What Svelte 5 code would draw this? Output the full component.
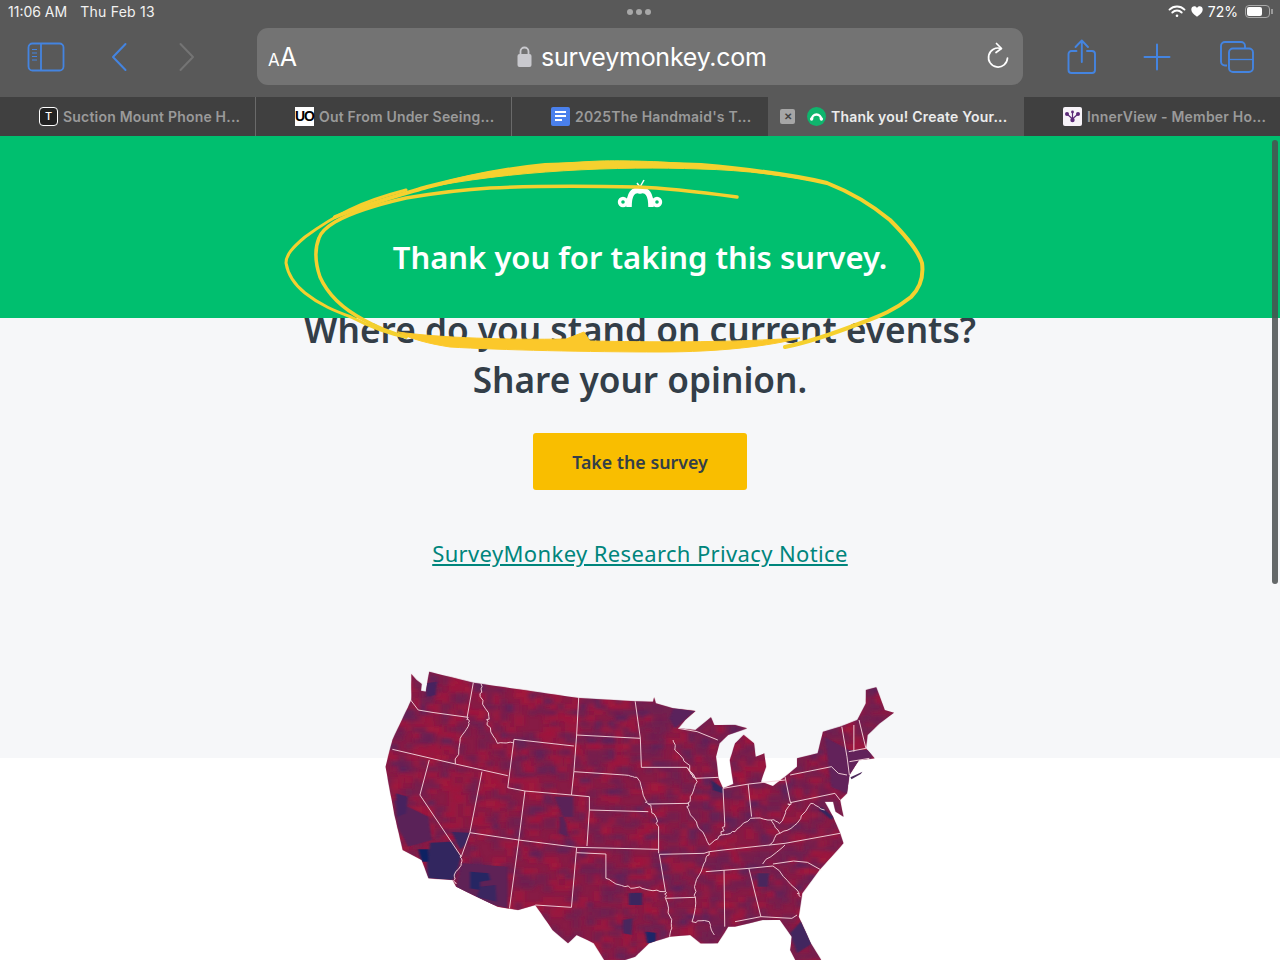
<script>
  const tabs = [
    { title: 'Suction Mount Phone H...', icon: 't' },
    { title: 'Out From Under Seeing...', icon: 'uo' },
    { title: "2025The Handmaid's T...", icon: 'doc' },
    { title: 'Thank you! Create Your...', icon: 'sm', active: true },
    { title: 'InnerView - Member Ho...', icon: 'iv' }
  ];

  const outline = 'M120,42 L135,60 L150,72 L148,92 L162,95 L172,35 L300,68 L606,114 L770,124 L822,125 L825,112 L830,130 L880,145 L945,153 L915,180 L895,205 L945,210 L990,172 L1000,195 L1060,195 L1095,205 L1040,225 L1015,250 L1005,290 L1012,355 L1025,385 L1055,372 L1045,300 L1060,250 L1085,225 L1115,250 L1120,290 L1145,280 L1150,320 L1135,365 L1170,378 L1205,350 L1240,320 L1240,295 L1300,280 L1315,215 L1365,200 L1415,180 L1440,130 L1440,90 L1470,82 L1495,150 L1522,158 L1480,190 L1445,225 L1440,265 L1465,295 L1420,300 L1392,345 L1385,400 L1365,420 L1375,470 L1352,455 L1345,425 L1320,425 L1345,470 L1365,520 L1375,550 L1340,590 L1305,630 L1255,700 L1245,770 L1280,850 L1310,900 L1235,900 L1220,870 L1225,830 L1190,780 L1140,780 L1060,800 L1040,800 L1010,850 L960,850 L930,825 L870,830 L810,850 L770,890 L740,900 L680,900 L650,850 L600,825 L575,850 L530,810 L480,735 L430,750 L370,740 L250,680 L240,660 L170,655 L150,600 L95,570 L70,460 L45,320 L65,240 L120,120 Z';

  const straight = [
    '118,120 140,150 180,157 285,172', '300,68 282,172', '65,268 248,312 400,347', '418,238 592,258',
    '606,114 600,225 592,335 585,405', '418,238 400,383', '400,383 450,393 585,405 637,410 637,450',
    '600,225 785,235', '770,124 785,235 788,322', '592,335 740,345', '637,450 808,455', '450,393 432,540',
    '637,450 630,558', '290,518 432,540 600,562 838,568', '838,500 838,580', '325,335 290,518',
    '172,300 145,405 265,590', '265,590 290,518', '432,540 405,745', '600,562 585,742 480,735',
    '600,578 685,582 685,655', '840,583 858,695', '858,715 945,712', '840,583 970,580 985,575',
    '975,635 1100,625 1170,618', '1028,630 1030,800', '1100,625 1135,770', '1060,785 1135,770 1225,775 1240,765',
    '1170,612 1230,603 1270,607 1310,630', '985,575 1025,570 1205,550 1365,520', '788,322 920,322', '808,432 925,430',
    '945,355 1012,352', '1025,385 1030,490', '1025,385 1100,372 1205,360', '1098,372 1108,470', '1205,350 1220,425',
    '1220,345 1340,320 1360,340 1385,345', '1220,428 1350,400 1365,420', '1370,200 1385,290 1392,345',
    '1405,195 1405,275', '1420,180 1440,265', '1390,275 1440,265', '1392,305 1450,295', '895,205 950,215 1010,240'
  ];
  const rivers = [
    '285,172 288,190 262,235 248,312', '322,70 320,110 345,170 340,195 370,250 415,248',
    '740,345 775,352 800,420 808,432 825,462 838,500', '265,590 265,610 245,650 250,672',
    '685,655 740,680 790,685 858,695', '858,695 858,715 875,790 870,830', '985,575 970,610 945,670 945,712 935,785 985,785 1000,825',
    '1170,618 1240,690 1250,710', '1140,612 1205,555', '920,322 945,355', '920,322 950,365 930,410 920,440 950,495 985,555',
    '880,240 885,270 920,310 945,355', '1030,490 1020,525 985,555',
    '1020,525 1060,515 1105,475 1165,480 1190,490 1215,440 1220,425', '1165,480 1190,520 1160,555',
    '1190,520 1240,490 1280,430 1320,450'
  ];

  let seed = 7;
  const rand = () => (seed = (seed * 16807) % 2147483647) / 2147483647;

  const wiggle = (line) => {
    const pts = line.split(' ').map((p) => p.split(',').map(Number));
    const out = [pts[0].join(',')];
    for (let i = 1; i < pts.length; i++) {
      const [ax, ay] = pts[i - 1];
      const [bx, by] = pts[i];
      for (let k = 1; k < 5; k++) {
        out.push(`${ax + ((bx - ax) * k) / 5 + (rand() - 0.5) * 9},${ay + ((by - ay) * k) / 5 + (rand() - 0.5) * 7}`);
      }
      out.push(`${bx},${by}`);
    }
    return out.join(' ');
  };
  const borders = [...straight, ...rivers.map(wiggle)];

  const cells = [];
  for (let y = 30; y < 900; y += 17) {
    for (let x = 40; x < 1530; x += 21) {
      const r = rand();
      const east = x / 1530;
      let fill = null;
      if (r < 0.18 + east * 0.22) fill = '#6a2053';
      else if (r < 0.21 + east * 0.26) fill = '#4d2563';
      else if (r > 0.86 - (1 - east) * 0.12) fill = '#a8163a';
      if (fill) cells.push({ x, y, w: 18 + rand() * 24, h: 14 + rand() * 20, fill });
    }
  }
  const darks = [
    { d: 'M175,548 L238,545 L265,590 L250,640 L240,660 L170,655 L165,610 Z', fill: '#33265f' },
    { d: 'M238,516 L290,518 L280,550 L262,570 Z', fill: '#3b2560' },
    { d: 'M70,420 L170,470 L180,540 L110,560 L80,500 Z', fill: '#5a2258' },
    { d: 'M75,400 L110,410 L105,460 L80,470 Z', fill: '#46245f' },
    { d: 'M268,610 L400,620 L400,745 L300,720 L250,680 Z', fill: '#5e2256' },
    { d: 'M290,635 L345,640 L350,660 L320,665 L320,690 L290,685 Z', fill: '#262663' },
    { d: 'M320,680 L365,675 L368,725 L310,710 Z', fill: '#3a2561' },
    { d: 'M140,568 L170,568 L170,605 L150,605 Z', fill: '#0a2463' },
    { d: 'M535,410 L590,410 L590,470 L550,470 L550,520 L575,530 L570,490 Z', fill: '#5a2358' },
    { d: 'M160,70 L195,65 L190,105 L165,110 Z', fill: '#46245f' },
    { d: 'M1220,820 L1255,780 L1285,850 L1240,880 Z', fill: '#43265f' },
    { d: 'M800,815 L830,818 L830,850 L805,850 Z', fill: '#1b2668' },
    { d: 'M752,700 L790,698 L790,735 L752,735 Z', fill: '#3a265f' },
    { d: 'M735,780 L762,775 L760,825 L735,820 Z', fill: '#4a265d' },
    { d: 'M1320,230 L1390,270 L1465,270 L1440,330 L1385,400 L1340,380 Z', fill: '#62225a' },
    { d: 'M880,145 L945,153 L885,205 L870,175 Z', fill: '#5a245b' },
    { d: 'M1125,640 L1160,640 L1155,680 L1125,680 Z', fill: '#4a265d' },
    { d: 'M990,360 L1025,385 L1025,400 L995,390 Z', fill: '#33265f' },
    { d: 'M1310,440 L1345,470 L1340,480 L1305,450 Z', fill: '#33265f' }
  ];
</script>

<div class="screen">
  <header class="chrome">
    <div class="status">
      <div class="status-left"><span>11:06 AM</span><span class="date">Thu Feb 13</span></div>
      <div class="dots"><i></i><i></i><i></i></div>
      <div class="status-right">
        <svg width="18" height="13" viewBox="0 0 18 13" fill="none" stroke="#fff" stroke-width="1.9" stroke-linecap="round">
          <path d="M1.5 4.6a10.6 10.6 0 0 1 15 0"/><path d="M4.3 7.5a6.6 6.6 0 0 1 9.400 0"/>
          <circle cx="9" cy="10.800" r="1.300" fill="#fff" stroke="none"/>
        </svg>
        <svg width="12" height="11" viewBox="0 0 12 11" fill="#fff">
          <path d="M6 10.800 C2 7.800 .3 6 .3 3.500 C.3 1.500 1.800 .3 3.300 .3 C4.500 .3 5.400 .9 6 1.900 C6.600 .9 7.500 .3 8.700 .3 C10.200 .3 11.700 1.500 11.700 3.500 C11.700 6 10 7.800 6 10.800Z"/>
        </svg>
        <span>72%</span>
        <div class="battery"><b></b></div>
        <div class="nub"></div>
      </div>
    </div>

    <div class="toolbar">
      <div class="tool-left">
        <svg class="blue" width="38" height="30" viewBox="0 0 38 30" fill="none" stroke-width="1.800">
          <rect x="1.500" y="1.500" width="35" height="27" rx="4"/><path d="M14 1.500v27"/>
          <path d="M5 7.500h5M5 11h5M5 14.500h5M5 18h5" stroke-width="1.100"/>
        </svg>
        <svg class="blue" width="16" height="30" viewBox="0 0 16 30" fill="none" stroke-width="2" stroke-linecap="round" stroke-linejoin="round">
          <path d="M14.500 2 L2 15 L14.500 28"/>
        </svg>
        <svg class="fwd" width="16" height="30" viewBox="0 0 16 30" fill="none" stroke-width="2" stroke-linecap="round" stroke-linejoin="round">
          <path d="M1.500 2 L14 15 L1.500 28"/>
        </svg>
      </div>

      <div class="address">
        <span class="aa"><small>A</small>A</span>
        <div class="url">
          <svg width="15" height="21" viewBox="0 0 15 21" fill="#c9c9ce">
            <rect x=".5" y="8" width="14" height="13" rx="2"/>
            <path d="M3.500 9V5.500a4 4 0 0 1 8 0V9" fill="none" stroke="#c9c9ce" stroke-width="1.800"/>
          </svg>
          <span>surveymonkey.com</span>
        </div>
        <svg class="reload" width="24" height="28" viewBox="0 0 24 28" fill="none" stroke="#fff" stroke-width="1.700" stroke-linecap="round" stroke-linejoin="round">
          <path d="M15 6.500 A9.500 9.500 0 1 0 21.500 16"/><path d="M10.500 1.500 L15.500 6.500 L10 10.500"/>
        </svg>
      </div>

      <div class="tool-right">
        <svg class="blue" width="30" height="36" viewBox="0 0 30 36" fill="none" stroke-width="1.900" stroke-linecap="round" stroke-linejoin="round">
          <path d="M9.500 12 H4.500 A3 3 0 0 0 1.500 15 V31 A3 3 0 0 0 4.500 34 H25 A3 3 0 0 0 28 31 V15 A3 3 0 0 0 25 12 H20"/>
          <path d="M14.800 23 V2 M8.500 8 L14.800 1.500 L21 8"/>
        </svg>
        <svg class="blue" width="28" height="28" viewBox="0 0 28 28" fill="none" stroke-width="2" stroke-linecap="round">
          <path d="M14 1.500V26.500M1.500 14H26.500"/>
        </svg>
        <svg class="blue" width="34" height="32" viewBox="0 0 34 32" fill="none" stroke-width="1.900">
          <path d="M7 24.500 H5 A4 4 0 0 1 1 20.500 V5 A4 4 0 0 1 5 1 H21 A4 4 0 0 1 25 5 V7"/>
          <rect x="9" y="7.500" width="24" height="23.500" rx="4"/><path d="M9 18.500H33" stroke-width="1.300"/>
        </svg>
      </div>
    </div>
  </header>

  <nav class="tabs">
    {#each tabs as tab}
      <div class="tab" class:active={tab.active}>
        {#if tab.active}<span class="close">✕</span>{/if}
        {#if tab.icon === 't'}
          <span class="fav fav-t">T</span>
        {:else if tab.icon === 'uo'}
          <span class="fav fav-uo">UO</span>
        {:else if tab.icon === 'doc'}
          <svg class="fav" width="19" height="19" viewBox="0 0 19 19">
            <rect width="19" height="19" rx="2" fill="#4a80ec"/>
            <path d="M4 5h11M4 9h11M4 13h7" stroke="#fff" stroke-width="2"/>
          </svg>
        {:else if tab.icon === 'sm'}
          <svg class="fav" width="19" height="19" viewBox="0 0 19 19">
            <circle cx="9.500" cy="9.500" r="9.500" fill="#0fb56d"/>
            <path d="M5 12 A4.500 4.500 0 0 1 14 12" fill="none" stroke="#fff" stroke-width="2.400"/>
            <circle cx="4.600" cy="12" r="1.700" fill="#fff"/><circle cx="14.400" cy="12" r="1.700" fill="#fff"/>
          </svg>
        {:else}
          <svg class="fav" width="19" height="19" viewBox="0 0 19 19">
            <rect width="19" height="19" rx="2" fill="#f7f3f8"/>
            <path d="M4 7 L9.500 12 L15 7 M9.500 5 V12" fill="none" stroke="#5b2a78" stroke-width="1.200"/>
            <circle cx="4" cy="7" r="2" fill="#5b2a78"/><circle cx="9.500" cy="13" r="2.200" fill="#5b2a78"/><circle cx="15" cy="7" r="2" fill="#5b2a78"/>
            <circle cx="9.500" cy="5" r="1.400" fill="#5b2a78"/>
          </svg>
        {/if}
        <span class="tab-title">{tab.title}</span>
      </div>
    {/each}
  </nav>

  <main class="page">
    <section class="banner">
      <svg class="logo" width="48" height="34" viewBox="0 0 48 34" fill="none" stroke="#fff" aria-hidden="true">
        <path d="M13 29 C13 16 17 11 24 13 C31 11 35 16 35 29" stroke-width="5.500"/>
        <circle cx="7" cy="24" r="3.500" stroke-width="3.400"/><circle cx="41" cy="24" r="3.500" stroke-width="3.400"/>
        <path d="M10 24 L15 21 M38 24 L33 21" stroke-width="3"/>
        <path d="M21 5 L24 9 L28 2" stroke-width="1.500"/>
      </svg>
      <h1>Thank you for taking this survey.</h1>
    </section>

    <section class="hero">
      <h2>Where do you stand on current events?<br />Share your opinion.</h2>
      <button class="cta">Take the survey</button>
      <a class="privacy" href="#privacy">SurveyMonkey Research Privacy Notice</a>
      <svg class="map" width="540" height="300" viewBox="0 0 1568 900" preserveAspectRatio="none" aria-hidden="true">
        <defs>
          <clipPath id="us"><path d={outline}/></clipPath>
          <filter id="soft"><feGaussianBlur stdDeviation="6 4"/></filter>
          <filter id="soft2"><feGaussianBlur stdDeviation="2.500 1.500"/></filter>
        </defs>
        <path d={outline} fill="#871b45"/>
        <path d="M1395,352 L1430,335 L1425,342 L1398,358 Z" fill="#4d2a5c"/>
        <g clip-path="url(#us)">
          <g filter="url(#soft)">
            {#each cells as c}<rect x={c.x} y={c.y} width={c.w} height={c.h} fill={c.fill} opacity=".55"/>{/each}
          </g>
          <g filter="url(#soft2)">
            {#each darks as d}<path d={d.d} fill={d.fill}/>{/each}
          </g>
        </g>
        <g fill="none" stroke="#f3d3da" stroke-width="2.800" stroke-linejoin="round">
          {#each borders as b}<polyline points={b}/>{/each}
        </g>
      </svg>
    </section>
  </main>

  <svg class="ink" width="1280" height="960" viewBox="0 0 1280 960" fill="none" stroke-linecap="round" stroke-linejoin="round" aria-hidden="true">
    <path d="M737 197 C700 192 670 188 638 187 C590 186 530 186 490 188 C455 190 430 194 406 198 C380 204 352 212 335 222 C325 228 321 232 319 238 C314 250 316 265 320 277 C328 295 345 310 364 320 C378 328 392 333 406 337" stroke="#f4d02f" stroke-width="3.500"/>
    <path d="M406 190 C360 202 335 215 305 237 C292 248 286 255 286 263 C288 275 295 285 305 293 C320 305 335 311 351 317 C370 327 388 334 406 337" stroke="#f4d02f" stroke-width="3"/>
    <path d="M335 217 C370 203 400 195 427 187 C470 176 510 168 545 165 C600 163 650 163 701 165 C745 169 790 174 827 183 C850 192 872 205 890 220 C905 235 918 250 922 263 C924 278 920 288 911 297 C895 310 880 316 861 323 C835 333 810 342 785 347" stroke="#f5d12f" stroke-width="4"/>
    <path fill="#f5d12f" stroke="#f5d12f" stroke-width="1" d="M420 189 C470 172 530 164 600 161 C650 160 720 163 830 184 C790 176 745 170 700 169 C620 166 510 170 420 189Z"/>
    <path fill="#fbc82a" stroke="#fbc82a" stroke-width="1" d="M398 332 C440 338 510 340 566 339 L584 332 L590 341 C650 342 720 343 800 338 C770 346 720 352 660 352 C590 352 500 350 450 347 C430 344 410 339 398 332Z"/>
  </svg>
  <div class="scroll"></div>
</div>

<style>
  :global(body) { margin: 0; background: #fff; }
  .screen { position: relative; width: 1280px; height: 960px; overflow: hidden; font-family: Inter, "Liberation Sans", sans-serif; }
  .chrome { height: 97px; background: #595959; color: #fff; }
  .status { height: 23px; display: flex; align-items: center; justify-content: space-between; padding: 0 7px 0 8px; position: relative; font-size: 14px; }
  .status-left { display: flex; gap: 13px; color: #f2f2f2; }
  .date { letter-spacing: .25px; }
  .dots { position: absolute; left: 627px; top: 9px; display: flex; gap: 3px; }
  .dots i { width: 6px; height: 6px; border-radius: 50%; background: #a8a8a8; }
  .status-right { display: flex; align-items: center; gap: 5px; }
  .battery { width: 25px; height: 13px; border: 1px solid #a9a9a9; border-radius: 4px; padding: 1px; box-sizing: border-box; margin-left: 2px; }
  .battery b { display: block; width: 72%; height: 100%; background: #fff; border-radius: 2px; }
  .nub { width: 2px; height: 5px; background: #9a9a9a; margin-left: -4px; }
  .toolbar { display: flex; align-items: center; height: 57px; margin-top: 5px; }
  .tool-left { width: 257px; box-sizing: border-box; display: flex; align-items: center; padding-left: 27px; }
  .tool-left svg:nth-child(2) { margin-left: 46px; }
  .tool-left svg:nth-child(3) { margin-left: 52px; }
  .blue { stroke: #4484e0; }
  .fwd { stroke: #747474; }
  .address { width: 766px; height: 57px; background: #737373; border-radius: 11px; display: flex; align-items: center; position: relative; }
  .aa { margin-left: 11px; font-size: 25px; color: #fff; }
  .aa small { font-size: 17px; }
  .url { position: absolute; left: 260px; top: 0; height: 57px; display: flex; align-items: center; gap: 9px; font-size: 25px; color: #fff; letter-spacing: -0.25px; }
  .reload { position: absolute; left: 729px; top: 14px; }
  .tool-right { display: flex; align-items: center; padding-left: 44px; }
  .tool-right svg:nth-child(2) { margin-left: 46px; }
  .tool-right svg:nth-child(3) { margin-left: 49px; }
  .tabs { display: flex; height: 39px; background: #404040; }
  .tab { width: 256px; box-sizing: border-box; display: flex; align-items: center; padding-left: 39px; gap: 5px; border-right: 1px solid #6a6a6a; color: #9a9a9a; font-size: 14px; font-weight: 600; letter-spacing: .2px; white-space: nowrap; overflow: hidden; }
  .tab:nth-child(3), .tab:nth-child(4), .tab:nth-child(5) { border-right: 0; }
  .tab.active { background: #595959; color: #ececec; position: relative; }
  .close { position: absolute; left: 12px; top: 12px; width: 15px; height: 15px; background: #a6a6a6; color: #444; border-radius: 2px; font-size: 10px; line-height: 15px; text-align: center; letter-spacing: 0; }
  .fav { flex: none; }
  .fav-t { width: 17px; height: 17px; border: 1.500px solid #fff; border-radius: 4px; background: #222; color: #fff; font-size: 11px; line-height: 17px; text-align: center; font-weight: 500; letter-spacing: 0; }
  .fav-uo { width: 19px; height: 19px; background: #fff; color: #000; font-size: 14px; font-weight: 800; line-height: 19px; text-align: center; font-family: "Liberation Sans", sans-serif; letter-spacing: -1px; }
  .page { font-family: "Noto Sans", sans-serif; }
  .banner { position: relative; z-index: 1; height: 182px; background: #00bf6f; display: flex; flex-direction: column; align-items: center; color: #fff; box-sizing: border-box; padding-top: 42px; }
  .logo { display: block; flex: none; }
  .banner h1 { margin: 23px 0 0; font-size: 31px; line-height: 44px; font-weight: 600; }
  .hero { height: 440px; background: #f6f7f9; display: flex; flex-direction: column; align-items: center; }
  .hero > * { flex: none; }
  .hero h2 { margin: -14px 0 0; color: #333e48; font-size: 35.200px; line-height: 50px; font-weight: 600; text-align: center; }
  .cta { margin-top: 29px; width: 214px; height: 57px; border: 0; border-radius: 3px; background: #f9be00; color: #333e48; font: 600 17.800px "Noto Sans", sans-serif; }
  .privacy { margin-top: 46px; color: #00857c; font-size: 22px; letter-spacing: .37px; line-height: 34px; }
  .map { margin-top: 90px; }
  .ink { position: absolute; left: 0; top: 0; z-index: 2; pointer-events: none; }
  .scroll { position: absolute; z-index: 3; left: 1272px; top: 140px; width: 6px; height: 444px; border-radius: 3px; background: #4a4f50; opacity: .85; }
</style>
